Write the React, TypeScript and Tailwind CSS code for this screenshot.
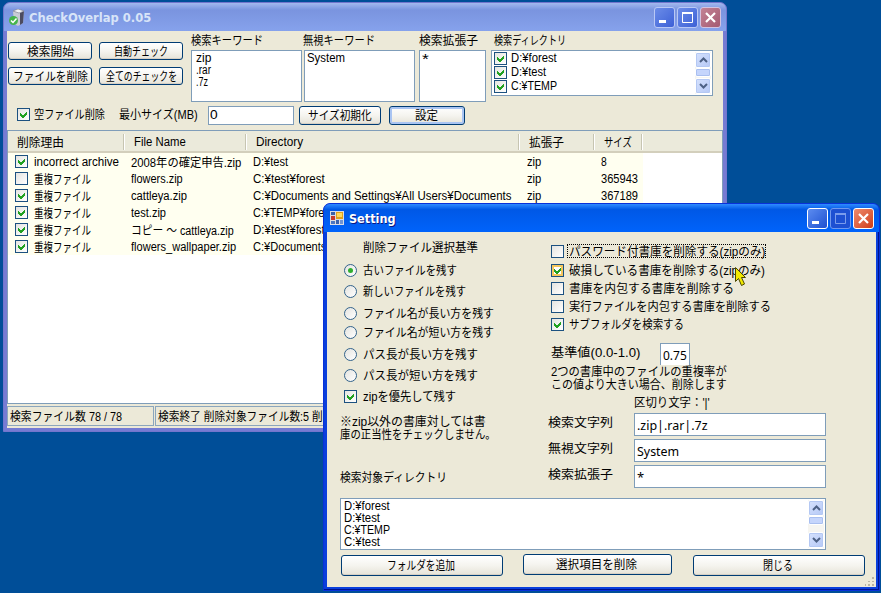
import { useLayoutEffect, useRef, type ReactNode } from "react";

/**
 * Single-line label that condenses or stretches its glyphs to fill its box.
 * Japanese glyphs sit a pixel lower so that they centre with the Latin ones.
 */
function Fit({ children, className = "" }: { children: string; className?: string }) {
  const box = useRef<HTMLSpanElement>(null);
  const ink = useRef<HTMLSpanElement>(null);
  useLayoutEffect(() => {
    if (!box.current || !ink.current) return;
    const scale = box.current.clientWidth / ink.current.offsetWidth;
    const drop = /[\u3040-\u9fff]/.test(children) ? 1 : 0;
    ink.current.style.transform = `translateY(${drop}px) scaleX(${scale})`;
  }, [children]);
  return (
    <span ref={box} className={`block shrink-0 whitespace-nowrap ${className}`}>
      <span ref={ink} className="inline-block origin-left">
        {children}
      </span>
    </span>
  );
}

function Check({ on = false, hot = false }: { on?: boolean; hot?: boolean }) {
  return (
    <span
      className={`flex size-[13px] shrink-0 items-center justify-center border border-[#1c5180] ${
        hot
          ? "bg-white shadow-[inset_0_0_0_2px_#f5c65c]"
          : "bg-linear-to-br from-[#e4e4e0] to-white"
      }`}
    >
      {on && (
        <svg width="9" height="9" viewBox="0 0 9 9" shapeRendering="crispEdges">
          <path d="M1 3v3l2 2h1l4-4V1L3.5 5.5z" fill="#21a121" />
        </svg>
      )}
    </span>
  );
}

function Radio({ on = false }: { on?: boolean }) {
  return (
    <span className="flex size-[13px] shrink-0 items-center justify-center rounded-full border border-[#33638c] bg-linear-to-br from-[#e4e4e0] to-white">
      {on && <span className="size-[5px] rounded-full bg-[#2fae2f]" />}
    </span>
  );
}

function Button({
  children,
  className = "",
  focus = false,
}: {
  children: ReactNode;
  className?: string;
  focus?: boolean;
}) {
  return (
    <button
      className={`flex shrink-0 items-center justify-center rounded-[3px] border border-[#003c74] bg-linear-to-b from-white via-[#f5f4ef] to-[#e6e3d8] ${
        focus ? "shadow-[inset_0_0_0_2px_#a9c4f2]" : "shadow-[inset_0_-1px_0_#d6d0c5]"
      } ${className}`}
    >
      {children}
    </button>
  );
}

function ScrollButton({ up = false }: { up?: boolean }) {
  return (
    <span className="flex h-[16px] w-[16px] shrink-0 items-center justify-center rounded-[2px] border border-white bg-linear-to-br from-[#d6e2fd] to-[#b5c8f6] shadow-[inset_0_0_0_1px_#b4c8f3]">
      <svg width="9" height="6" viewBox="0 0 9 6" fill="none" stroke="#4d6185" strokeWidth="2">
        <path d={up ? "M1 5l3.5-3.5L8 5" : "M1 1l3.5 3.5L8 1"} />
      </svg>
    </span>
  );
}

function ScrollBar({ className = "" }: { className?: string }) {
  return (
    <div className={`flex w-[16px] flex-col bg-[#f6f5f1] ${className}`}>
      <ScrollButton up />
      <span className="h-[9px] shrink-0 rounded-[2px] border border-white bg-[#c5d5fc] shadow-[inset_0_0_0_1px_#a9bff0]" />
      <span className="grow" />
      <ScrollButton />
    </div>
  );
}

function CaptionButton({ kind, tone }: { kind: "min" | "max" | "close"; tone: string }) {
  return (
    <span className={`flex size-[21px] shrink-0 items-center justify-center rounded-[3px] border ${tone}`}>
      <svg width="19" height="19" viewBox="0 0 19 19" fill="none" stroke="currentColor">
        {kind === "min" && <path d="M4 13.5h7" strokeWidth="3" />}
        {kind === "max" && (
          <>
            <path d="M4 5h11" strokeWidth="2" />
            <path d="M4.5 4v10.500h10V4" strokeWidth="1" />
          </>
        )}
        {kind === "close" && <path d="M5 5l9 9M14 5l-9 9" strokeWidth="2.200" />}
      </svg>
    </span>
  );
}

function AppIcon() {
  return (
    <svg width="16" height="17" viewBox="0 0 16 17">
      <path d="M4 2l5-2 6 2-1 12-5 3-4-2z" fill="#c9cbd6" />
      <path d="M11 4l4-2-1 12-3 2z" fill="#4c4b60" />
      <path d="M4 2l5-2 6 2-5 2z" fill="#f3f4f8" stroke="#77788c" strokeWidth=".6" />
      <circle cx="4.500" cy="11.500" r="4.500" fill="#46b44c" />
      <path d="M2 11.500l2 2 3.500-4" fill="none" stroke="#fff" strokeWidth="1.500" />
    </svg>
  );
}

function FormIcon() {
  return (
    <svg width="14" height="14" viewBox="0 0 14 14" shapeRendering="crispEdges">
      <path d="M0 0h14v14H0z" fill="#d9dce4" />
      <path d="M1 1h4v3H1z" fill="#3b62a8" />
      <path d="M1 5h4v4H1z" fill="#c83a2c" />
      <path d="M6 1h7v7H6z" fill="#e0a21c" />
      <path d="M7 2h5v4H7z" fill="#ffd95a" />
      <path d="M1 10h4v3H1z" fill="#4a76c2" />
      <path d="M6 9h3v4H6z" fill="#3761ae" />
      <path d="M10 9h3v4h-3z" fill="#6f94d4" />
    </svg>
  );
}

const cols = "grid grid-cols-[117px_122px_273px_75px_48px]";

const rows = [
  { on: true, why: "incorrect archive", ww: "w-[85px]", name: "2008年の確定申告.zip", nw: "w-[110px]", dir: "D:¥test", dw: "w-[35px]", size: "8", sw: "w-[6px]" },
  { on: false, why: "重複ファイル", ww: "w-[57px]", name: "flowers.zip", nw: "w-[52px]", dir: "C:¥test¥forest", dw: "w-[72px]", size: "365943", sw: "w-[37px]" },
  { on: true, why: "重複ファイル", ww: "w-[57px]", name: "cattleya.zip", nw: "w-[56px]", dir: "C:¥Documents and Settings¥All Users¥Documents", dw: "w-[258px]", size: "367189", sw: "w-[37px]" },
  { on: true, why: "重複ファイル", ww: "w-[57px]", name: "test.zip", nw: "w-[35px]", dir: "C:¥TEMP¥fore", dw: "w-[71px]" },
  { on: true, why: "重複ファイル", ww: "w-[57px]", name: "コピー ～ cattleya.zip", nw: "w-[103px]", dir: "D:¥test¥forest", dw: "w-[72px]" },
  { on: true, why: "重複ファイル", ww: "w-[57px]", name: "flowers_wallpaper.zip", nw: "w-[105px]", dir: "C:¥Documents", dw: "w-[73px]" },
];

function HeaderCell({ children }: { children: ReactNode }) {
  return (
    <div className="flex items-center pt-px pl-[9px]">
      <div className="grow">{children}</div>
      <span className="h-[16px] w-[2px] border-r border-l border-r-white border-l-[#c7c5b2]" />
    </div>
  );
}

const field = "border border-[#7f9db9] bg-white";

const caption = "font-['DejaVu_Sans','Noto_Sans_CJK_JP',sans-serif] text-[12px] font-bold";

function MainWindow() {
  return (
    <section className="absolute top-[2px] left-[3px] flex h-[430px] w-[724px] flex-col rounded-t-[7px] border border-[#7375cd] bg-[#767bd3] px-[3px] pb-[3px]">
      <header className="-mx-[3px] flex h-[28px] shrink-0 items-center rounded-t-[6px] bg-linear-to-b from-[#a3b8ee] via-[#7a94df] via-25% to-[#86a2ec] pr-[5px] pl-[5px]">
        <AppIcon />
        <Fit className={`ml-[4px] w-[122px] pt-px text-[#d8e4f8] ${caption}`}>CheckOverlap 0.05</Fit>
        <div className="ml-auto flex gap-[2px] pt-[1px]">
          <CaptionButton kind="min" tone="border-[#b9c8f5] bg-linear-to-br from-[#6c8ce8] to-[#3d60d6] text-white" />
          <CaptionButton kind="max" tone="border-[#b9c8f5] bg-linear-to-br from-[#6c8ce8] to-[#3d60d6] text-white" />
          <CaptionButton kind="close" tone="border-[#d3c3e0] bg-linear-to-br from-[#c38395] to-[#a45a72] text-white" />
        </div>
      </header>

      <div className="flex min-h-0 grow flex-col bg-[#ece9d8]">
        <div className="flex h-[99px] shrink-0 flex-col pl-[1px]">
          <div className="flex h-[74px]">
            <div className="grid grid-cols-[84px_84px] content-start gap-x-[7px] gap-y-[7px] pt-[11px]">
              <Button className="h-[18px]"><Fit className="w-[47px]">検索開始</Fit></Button>
              <Button className="h-[18px]"><Fit className="w-[54px]">自動チェック</Fit></Button>
              <Button className="h-[18px]"><Fit className="w-[75px]">ファイルを削除</Fit></Button>
              <Button className="h-[18px]"><Fit className="w-[71px]">全てのチェックを</Fit></Button>
            </div>
            <div className="ml-[8px] w-[111px]">
              <Fit className="w-[72px] leading-[19px]">検索キーワード</Fit>
              <div className={`h-[52px] pt-[1px] pl-[4px] leading-[12px] ${field}`}>
                <Fit className="w-[15px]">zip</Fit>
                <Fit className="w-[15px]">.rar</Fit>
                <Fit className="w-[12px]">.7z</Fit>
              </div>
            </div>
            <div className="ml-[2px] w-[111px]">
              <Fit className="-ml-px w-[72px] leading-[19px]">無視キーワード</Fit>
              <div className={`h-[52px] pt-[1px] pl-[2px] leading-[12px] ${field}`}>
                <Fit className="w-[38px]">System</Fit>
              </div>
            </div>
            <div className="ml-[4px] w-[67px]">
              <Fit className="w-[59px] leading-[19px]">検索拡張子</Fit>
              <div className={`h-[52px] pl-[2px] text-[15px] leading-[15px] ${field}`}>
                <Fit className="w-[7px]">*</Fit>
              </div>
            </div>
            <div className="ml-[5px] w-[222px]">
              <Fit className="ml-[3px] w-[72px] leading-[19px]">検索ディレクトリ</Fit>
              <div className={`flex h-[46px] justify-between pr-[1px] ${field}`}>
                <div className="flex flex-col pl-[2px]">
                  <div className="flex h-[14px] items-center gap-[4px] pt-[1px]"><Check on /><Fit className="w-[46px] leading-[13px]">D:¥forest</Fit></div>
                  <div className="flex h-[14px] items-center gap-[4px] pt-[1px]"><Check on /><Fit className="w-[35px] leading-[13px]">D:¥test</Fit></div>
                  <div className="flex h-[14px] items-center gap-[4px] pt-[1px]"><Check on /><Fit className="w-[46px] leading-[13px]">C:¥TEMP</Fit></div>
                </div>
                <ScrollBar className="my-[1px]" />
              </div>
            </div>
          </div>
          <div className="flex h-[20px] items-center">
            <span className="-mt-[2px] ml-[9px]"><Check on /></span>
            <Fit className="-mt-[3px] ml-[4px] w-[71px]">空ファイル削除</Fit>
            <Fit className="-mt-[3px] ml-[14px] w-[79px]">最小サイズ(MB)</Fit>
            <div className={`ml-[10px] flex h-[19px] w-[86px] items-center pl-[1px] ${field}`}>
              <Fit className="w-[8px]">0</Fit>
            </div>
            <Button className="ml-[5px] h-[19px] w-[82px]"><Fit className="w-[64px]">サイズ初期化</Fit></Button>
            <Button focus className="ml-[8px] h-[19px] w-[76px]"><Fit className="-ml-[2px] w-[23px]">設定</Fit></Button>
          </div>
        </div>

        <div className={`flex h-[274px] shrink-0 flex-col ${field}`}>
          <div className="h-[22px] shrink-0 border-b-2 border-[#d3cfbc] bg-[#ebeadb]">
            <div className={`h-full ${cols}`}>
              <HeaderCell><Fit className="w-[47px]">削除理由</Fit></HeaderCell>
              <HeaderCell><Fit className="w-[52px]">File Name</Fit></HeaderCell>
              <HeaderCell><Fit className="w-[47px]">Directory</Fit></HeaderCell>
              <HeaderCell><Fit className="w-[35px]">拡張子</Fit></HeaderCell>
              <HeaderCell><Fit className="w-[28px]">サイズ</Fit></HeaderCell>
            </div>
          </div>
          {rows.map((r, i) => (
            <div key={i} className={`h-[17px] w-[635px] shrink-0 items-center bg-[#fffff0] ${cols}`}>
              <div className="flex items-center gap-[6px] pl-[7px]">
                <Check on={r.on} />
                <Fit className={r.ww}>{r.why}</Fit>
              </div>
              <div className="pl-[6px]"><Fit className={r.nw}>{r.name}</Fit></div>
              <div className="pl-[6px]"><Fit className={r.dw}>{r.dir}</Fit></div>
              <div className="pl-[7px]">{r.size && <Fit className="w-[14px]">zip</Fit>}</div>
              <div className="pl-[6px]">{r.size && <Fit className={r.sw}>{r.size}</Fit>}</div>
            </div>
          ))}
        </div>

        <footer className="mt-[2px] flex h-[20px] gap-[1px]">
          <div className="flex w-[147px] items-center border border-[#8ba6bd] pl-[2px]">
            <Fit className="w-[112px]">検索ファイル数 78 / 78</Fit>
          </div>
          <div className="flex grow items-center border border-[#8ba6bd] pl-[2px]">
            <Fit className="w-[165px]">検索終了 削除対象ファイル数:5 削</Fit>
          </div>
        </footer>
      </div>
    </section>
  );
}

const choices = [
  { on: true, text: "古いファイルを残す", w: "w-[94px]", mt: "mt-[5px]" },
  { text: "新しいファイルを残す", w: "w-[103px]", mt: "mt-[3px]" },
  { text: "ファイル名が長い方を残す", w: "w-[131px]", mt: "mt-[4px]" },
  { text: "ファイル名が短い方を残す", w: "w-[131px]", mt: "mt-[1px]" },
  { text: "パス長が長い方を残す", w: "w-[115px]", mt: "mt-[4px]" },
  { text: "パス長が短い方を残す", w: "w-[115px]", mt: "mt-[3px]" },
];

const options = [
  { on: true, hot: true, text: "破損している書庫を削除する(zipのみ)", w: "w-[196px]" },
  { text: "書庫を内包する書庫を削除する", w: "w-[165px]" },
  { text: "実行ファイルを内包する書庫を削除する", w: "w-[202px]" },
  { on: true, text: "サブフォルダを検索する", w: "w-[115px]" },
];

const fields = [
  { label: "検索文字列", value: ".zip|.rar|.7z", w: "w-[71px]" },
  { label: "無視文字列", value: "System", w: "w-[42px]" },
  { label: "検索拡張子", value: "*", w: "w-[7px]" },
];

const folders = [
  { text: "D:¥forest", w: "w-[46px]" },
  { text: "D:¥test", w: "w-[36px]" },
  { text: "C:¥TEMP", w: "w-[46px]" },
  { text: "C:¥test", w: "w-[36px]" },
];

const edit = "font-['Noto_Sans','DejaVu_Sans',sans-serif] text-[13px]";

function SettingWindow() {
  return (
    <section className="absolute top-[203px] left-[323px] flex h-[388px] w-[557px] flex-col rounded-t-[7px] border border-[#0831d9] bg-[#0a3fdc] px-[3px] pb-[3px] shadow-[inset_-1px_-1px_0_#00138c]">
      <header className="-mx-[3px] flex h-[28px] shrink-0 items-center rounded-t-[6px] bg-linear-to-b from-[#2f8bff] via-[#0058e6] via-20% to-[#0063fb] pr-[5px] pl-[6px]">
        <FormIcon />
        <Fit className={`ml-[5px] w-[47px] pt-px text-white [text-shadow:1px_1px_#0a1883] ${caption}`}>Setting</Fit>
        <div className="ml-auto flex gap-[2px] pt-[1px]">
          <CaptionButton kind="min" tone="border-white bg-linear-to-br from-[#5c8cf0] to-[#1f4fd0] text-white" />
          <CaptionButton kind="max" tone="border-[#6f98ee] bg-[#1d50d2] text-[#7a9cec]" />
          <CaptionButton kind="close" tone="border-white bg-linear-to-br from-[#ee8a6c] to-[#cf3a12] text-white" />
        </div>
      </header>

      <div className="flex min-h-0 grow flex-col bg-[#ece9d8]">
        <div className="flex h-[266px] shrink-0">
          <div className="w-[221px] pt-[6px] pl-[13px]">
            <Fit className="ml-[23px] w-[115px] leading-[18px]">削除ファイル選択基準</Fit>
            {choices.map((c) => (
              <div key={c.text} className={`flex h-[18px] items-center gap-[6px] pl-[4px] ${c.mt}`}>
                <Radio on={c.on} />
                <Fit className={c.w}>{c.text}</Fit>
              </div>
            ))}
            <div className="mt-[3px] flex h-[18px] items-center gap-[6px] pl-[4px]">
              <Check on />
              <Fit className="w-[93px]">zipを優先して残す</Fit>
            </div>
            <div className="mt-[10px] leading-[13px]">
              <Fit className="w-[146px]">※zip以外の書庫対しては書</Fit>
              <Fit className="w-[156px]">庫の正当性をチェックしません。</Fit>
            </div>
            <Fit className="mt-[27px] w-[107px] leading-[18px]">検索対象ディレクトリ</Fit>
          </div>

          <div className="pt-[10px]">
            <div className="flex h-[18px] items-center gap-[3px] pl-[3px]">
              <Check />
              <span className="flex h-[14px] items-center border border-dotted border-black pl-[1px]">
                <Fit className="w-[196px]">パスワード付書庫を削除する(zipのみ)</Fit>
              </span>
            </div>
            <div className="mt-[1px]">
              {options.map((o) => (
                <div key={o.text} className="flex h-[18px] items-center gap-[5px] pl-[3px]">
                  <Check on={o.on} hot={o.hot} />
                  <Fit className={o.w}>{o.text}</Fit>
                </div>
              ))}
            </div>
            <div className="mt-[10px] flex h-[22px] pl-[3px]">
              <Fit className="w-[89px] leading-[19px]">基準値(0.0-1.0)</Fit>
              <div className={`ml-[20px] flex w-[30px] items-center border border-b-0 border-[#7f9db9] bg-white pl-[2px] ${edit}`}>
                <Fit className="w-[24px]">0.75</Fit>
              </div>
            </div>
            <div className="pl-[3px] leading-[13px]">
              <Fit className="w-[176px]">2つの書庫中のファイルの重複率が</Fit>
              <Fit className="w-[176px]">この値より大きい場合、削除します</Fit>
            </div>
            <Fit className="mt-[2px] ml-[86px] w-[76px] leading-[18px]">区切り文字：'|'</Fit>
            <div className="mt-[2px] flex flex-col gap-[3px]">
              {fields.map((f) => (
                <div key={f.label} className="flex h-[23px]">
                  <Fit className="w-[65px] leading-[18px]">{f.label}</Fit>
                  <div className={`ml-[21px] flex w-[192px] items-center pl-[2px] ${field} ${edit}`}>
                    <Fit className={f.w}>{f.value}</Fit>
                  </div>
                </div>
              ))}
            </div>
          </div>
        </div>

        <div className={`ml-[13px] flex h-[52px] w-[486px] shrink-0 justify-between pr-[1px] ${field}`}>
          <div className="pt-[1px] pl-[3px] leading-[12px]">
            {folders.map((f) => (
              <Fit key={f.text} className={f.w}>{f.text}</Fit>
            ))}
          </div>
          <ScrollBar className="my-[1px]" />
        </div>

        <div className="mt-[4px] flex pl-[14px]">
          <Button className="mt-px h-[21px] w-[162px]"><Fit className="-mt-px -ml-[2px] w-[68px]">フォルダを追加</Fit></Button>
          <Button className="ml-[20px] h-[21px] w-[149px]"><Fit className="-mt-px -ml-[2px] w-[81px]">選択項目を削除</Fit></Button>
          <Button className="mt-px ml-[21px] h-[21px] w-[172px]"><Fit className="-mt-px -ml-[2px] w-[30px]">閉じる</Fit></Button>
        </div>
        <svg className="mt-auto ml-auto" width="12" height="12" viewBox="0 0 12 12" fill="#b8b4a3" shapeRendering="crispEdges">
          <path d="M8 1h2v2H8zM4 5h2v2H4zM8 5h2v2H8zM0 9h2v2H0zM4 9h2v2H4zM8 9h2v2H8z" />
        </svg>
      </div>
    </section>
  );
}

export default function App() {
  return (
    <main className="relative h-[593px] w-[881px] overflow-hidden bg-[#004e98] font-['Liberation_Sans','Noto_Sans_CJK_JP',sans-serif] text-[12px] leading-[14px] text-black">
      <MainWindow />
      <SettingWindow />
      <svg className="absolute top-[267px] left-[735px]" width="12" height="20" viewBox="0 0 12 20">
        <path d="M.5.5v14l3-3 3 7 3-1.500-3-6.500h4z" fill="#f2ea00" stroke="#4b4800" />
      </svg>
    </main>
  );
}
